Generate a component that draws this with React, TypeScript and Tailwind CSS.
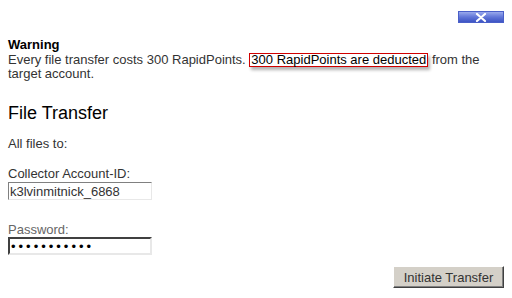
export default function App() {
  return (
    <div className="w-[512px] h-[298px] bg-white text-[13px] leading-[13px] text-[#333] font-['Liberation_Sans',Arial,sans-serif] overflow-hidden">
      <div className="flex justify-end pt-[11px] pr-[8px]">
        <button className="w-[46px] h-[12px] flex items-center justify-center bg-gradient-to-b from-[#9aa9ec] via-[#6276d8] to-[#3e54c4] border border-[#4a5fc8]">
          <svg width="12" height="9" viewBox="0 0 12 9">
            <path d="M2 1 L10 8 M10 1 L2 8" stroke="#fff" strokeWidth="2.2" strokeLinecap="round" />
          </svg>
        </button>
      </div>
      <div className="px-[8px] mt-[15px]">
        <div className="font-bold text-black leading-[14px]">Warning</div>
        <div className="mt-[1px] w-[480px] leading-[14px]">
          Every file transfer costs 300 RapidPoints.{' '}
          <span className="inline-block leading-[12px] border border-solid border-[#d00000] px-[1px] text-black shadow-[2px_3px_3px_rgba(0,0,0,0.3)]">
            300 RapidPoints are deducted
          </span>{' '}
          from the target account.
        </div>
        <div className="mt-[22px] text-[18px] leading-[20px] text-black">File Transfer</div>
        <div className="mt-[14px]">All files to:</div>
        <div className="mt-[17px]">Collector Account-ID:</div>
        <input
          readOnly
          value="k3lvinmitnick_6868"
          className="block mt-[2px] w-[144px] h-[18px] px-[1px] text-[13px] text-[#333] border-t-[#808080] border-l-[#808080] border-b-[#e8e8e8] border-r-[#e8e8e8] border border-solid outline-none"
        />
        <div className="mt-[23px] text-[#666]">Password:</div>
        <input
          readOnly
          type="password"
          value="aaaaaaaaaaa"
          className="block mt-[1px] w-[144px] h-[18px] px-[1px] text-[13px] tracking-[3px] text-black border-t-[#404040] border-l-[#404040] border-b-[#e8e8e8] border-r-[#e8e8e8] border-2 border-solid outline-none"
        />
        <div className="flex justify-end mt-[11px]">
          <button className="w-[111px] h-[22px] bg-[#d4d0c8] text-[13px] text-[#333] border border-solid border-t-white border-l-white border-b-[#404040] border-r-[#404040] shadow-[inset_-1px_-1px_0_#808080]">
            Initiate Transfer
          </button>
        </div>
      </div>
    </div>
  );
}
